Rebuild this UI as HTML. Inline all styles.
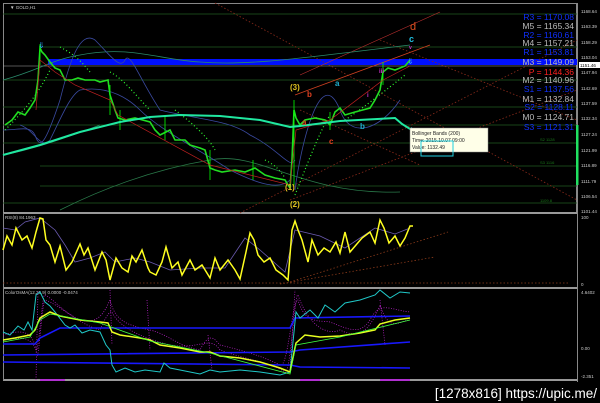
<!DOCTYPE html>
<html><head><meta charset="utf-8"><style>
html,body{margin:0;padding:0;background:#000;width:600px;height:403px;overflow:hidden}
svg{display:block}
text{font-family:"Liberation Sans",sans-serif}
</style></head><body>
<svg width="600" height="403" viewBox="0 0 600 403" xmlns="http://www.w3.org/2000/svg">
<rect width="600" height="403" fill="#000"/>
<!-- frames -->
<rect x="3.5" y="3.5" width="573" height="209" fill="none" stroke="#888" stroke-width="1"/>
<line x1="3" y1="213" x2="578" y2="213" stroke="#999" stroke-width="2"/>
<line x1="3" y1="288" x2="578" y2="288" stroke="#999" stroke-width="2"/>
<line x1="3" y1="380" x2="578" y2="380" stroke="#999" stroke-width="2"/>
<line x1="3.5" y1="213" x2="3.5" y2="380" stroke="#888"/>
<line x1="577.5" y1="3" x2="577.5" y2="382" stroke="#888"/>
<text x="10" y="9" font-size="4.5" fill="#ccc">▼ GOLD,H1</text>
<!-- grid green levels -->
<g stroke="#1f5a1f" stroke-width="0.8">
<line x1="40" y1="47" x2="577" y2="47"/><line x1="3" y1="80" x2="577" y2="80"/>
<line x1="3" y1="107" x2="577" y2="107"/><line x1="3" y1="125" x2="577" y2="125"/>
<line x1="3" y1="143" x2="577" y2="143"/><line x1="40" y1="166" x2="577" y2="166"/>
<line x1="40" y1="186" x2="577" y2="186"/><line x1="3" y1="203" x2="577" y2="203"/>
<line x1="3" y1="14" x2="577" y2="14"/>
</g>
<line x1="3" y1="66" x2="577" y2="66" stroke="#aaa" stroke-width="0.6"/>
<!-- blue band -->
<rect x="48" y="59" width="529" height="6" fill="#0010ff"/>
<!-- red dotted diagonal lines -->
<g stroke="#8a2a1a" stroke-width="0.8" stroke-dasharray="1.5,2" fill="none">
<line x1="215" y1="3" x2="577" y2="200"/><line x1="290" y1="200" x2="577" y2="90"/>
<line x1="380" y1="40" x2="577" y2="120"/><line x1="240" y1="213" x2="577" y2="40"/>
<line x1="300" y1="110" x2="420" y2="165"/>
</g>
<line x1="295" y1="95" x2="430" y2="45" stroke="#d04020" stroke-width="0.8"/>
<line x1="300" y1="75" x2="440" y2="12" stroke="#c03030" stroke-width="0.6"/>
<!-- bollinger bands thin -->
<g fill="none" stroke-width="0.8">
<path d="M3,80 C40,70 50,60 80,55 C130,45 160,60 200,62 C250,66 300,58 410,45" stroke="#2a8a6a"/>
<path d="M3,155 C30,150 60,140 100,125" stroke="#2a8a6a"/>
<path d="M60,210 C100,190 150,170 210,160 C260,150 300,195 400,192" stroke="#2a7a4a"/>
<path d="M3,130 C20,130 30,125 35,135 C40,150 45,145 60,100 C70,60 80,30 95,40 C110,55 120,70 125,60 C130,50 140,80 160,110 C200,120 230,120 250,135 C280,150 290,170 295,160" stroke="#3a4aa0"/>
<path d="M20,125 C35,130 40,150 50,140 C60,120 70,95 80,90 C110,85 130,100 140,110 C160,130 200,150 230,170 C260,185 280,190 290,180" stroke="#3a4aa0"/>
<path d="M295,190 C300,150 320,60 340,110 C350,140 380,130 400,100" stroke="#3a4aa0"/>
</g>
<!-- PSAR dots -->
<g fill="none" stroke="#30ff30" stroke-width="1.2" stroke-dasharray="1,2.5">
<path d="M60,47 C75,55 80,60 90,72"/><path d="M110,72 C125,80 135,95 150,110"/>
<path d="M5,130 C30,105 40,90 50,70"/><path d="M175,110 C195,125 210,140 215,150"/>
<path d="M265,160 C275,165 280,170 285,178"/><path d="M295,195 C305,170 320,130 330,115"/>
<path d="M345,120 C360,110 380,95 405,75"/>
</g>
<!-- price candles (approx) -->
<polyline fill="none" stroke="#22dd22" stroke-width="1.6" points="5,125 12,120 18,112 25,115 30,108 35,100 38,80 40,48 42,52 45,55 50,62 55,68 60,70 65,80 72,80 78,78 85,80 95,80 100,82 108,80 110,95 115,110 118,118 125,120 135,118 150,122 155,130 160,135 170,130 175,140 185,140 190,145 200,148 205,150 210,168 215,170 222,172 235,170 245,172 255,168 265,175 275,178 285,180 290,188 292,160 294,110 296,118 300,125 305,120 315,118 325,120 330,125 335,112 340,108 345,115 355,112 370,108 375,100 380,90 383,72 388,68 395,70 405,66 410,60"/>
<g stroke="#00ff00" stroke-width="0.8">
<line x1="40" y1="44" x2="40" y2="65"/><line x1="110" y1="85" x2="110" y2="115"/><line x1="210" y1="150" x2="210" y2="180"/><line x1="294" y1="100" x2="294" y2="185"/><line x1="383" y1="62" x2="383" y2="85"/>
<line x1="120" y1="110" x2="120" y2="130"/><line x1="165" y1="115" x2="165" y2="140"/><line x1="253" y1="160" x2="253" y2="180"/><line x1="330" y1="112" x2="330" y2="130"/>
</g>
<polyline fill="none" stroke="#c02020" stroke-width="0.7" points="36,110 40,60 55,72 75,85 110,100 118,115 210,165 290,185 296,130 330,120 383,80 410,66"/>
<!-- MA200 thick -->
<polyline fill="none" stroke="#20e8a0" stroke-width="2" points="3,155 40,145 80,132 120,122 150,117 180,115 220,116 260,120 290,127 300,126 340,121 395,118 402,124 415,132"/>
<polygon points="411,127 420,134 410,135" fill="#20e8e8"/>
<!-- wave labels -->
<g font-size="8" font-weight="bold">
<text x="290" y="90" fill="#e0c020">(3)</text>
<text x="307" y="97" fill="#e04020">b</text>
<text x="335" y="86" fill="#20b0d0">a</text>
<text x="302" y="125" fill="#e04020">a</text>
<text x="329" y="144" fill="#e04020">c</text>
<text x="360" y="129" fill="#20b0d0">b</text>
<text x="285" y="190" fill="#e0c020">(1)</text>
<text x="290" y="207" fill="#e0c020">(2)</text>
<text x="410" y="30" fill="#e05020" font-size="11" font-weight="normal">d</text>
<text x="409" y="42" fill="#20c0e0" font-size="9">c</text>
<text x="409" y="49" fill="#d030d0" font-size="5">v</text>
<text x="379" y="73" fill="#d030d0" font-size="6">iii</text>
<text x="367" y="97" fill="#d030d0" font-size="6">i</text>
</g>
<text x="38" y="48" fill="#30a0ff" font-size="8">⇓</text>
<text x="407" y="64" fill="#30a0ff" font-size="8">⇓</text>
<!-- tooltip -->
<rect x="410" y="128" width="78" height="24" fill="#ffffe8" stroke="#888" stroke-width="0.5"/>
<text x="412" y="135" font-size="5" fill="#222">Bollinger Bands (200)</text>
<text x="412" y="142" font-size="5" fill="#222">Time: 2015.10.07 09:00</text>
<text x="412" y="149" font-size="5" fill="#222">Value: 1132.49</text>
<rect x="421" y="141" width="32" height="15" fill="none" stroke="#20d0e0" stroke-width="1"/>
<!-- pivot labels -->
<g font-size="8.5" text-anchor="end">
<text x="574" y="20" fill="#1030ff">R3 = 1170.08</text>
<text x="574" y="29" fill="#bbb">M5 = 1165.34</text>
<text x="574" y="38" fill="#1030ff">R2 = 1160.61</text>
<text x="574" y="46" fill="#bbb">M4 = 1157.21</text>
<text x="574" y="55" fill="#1030ff">R1 = 1153.81</text>
<text x="574" y="65" fill="#bbb">M3 = 1149.09</text>
<text x="574" y="75" fill="#ff2020">P  = 1144.36</text>
<text x="574" y="83" fill="#bbb">M2 = 1140.96</text>
<text x="574" y="92" fill="#1030ff">S1 = 1137.56</text>
<text x="574" y="102" fill="#bbb">M1 = 1132.84</text>
<text x="574" y="110" fill="#1030ff">S2 = 1128.11</text>
<text x="574" y="120" fill="#bbb">M0 = 1124.71</text>
<text x="574" y="130" fill="#1030ff">S3 = 1121.31</text>
</g>
<g font-size="4" fill="#1a7a1a"><text x="540" y="141">S2 1128</text><text x="540" y="164">S3 1116</text><text x="540" y="202">1109.8</text></g>
<!-- right axis -->
<rect x="576" y="125" width="2.5" height="60" fill="#20e060"/>
<g font-size="4.5" fill="#ccc">
<text x="581" y="13">1168.64</text><text x="581" y="28">1163.39</text><text x="581" y="44">1158.29</text>
<text x="581" y="59">1153.04</text><text x="581" y="74">1147.94</text><text x="581" y="90">1142.69</text>
<text x="581" y="105">1137.59</text><text x="581" y="120">1132.34</text><text x="581" y="136">1127.24</text>
<text x="581" y="152">1121.99</text><text x="581" y="167">1116.89</text><text x="581" y="183">1111.79</text>
<text x="581" y="198">1106.54</text><text x="581" y="213">1101.44</text><text x="581" y="219">100</text>
<text x="581" y="286">0</text><text x="581" y="294">4.6402</text><text x="581" y="350">0.00</text><text x="581" y="378">-2.351</text>
</g>
<rect x="579" y="62" width="21" height="6" fill="#fff"/><text x="580" y="67" font-size="4.5" fill="#000">1151.46</text>
<!-- RSI -->
<text x="5" y="219" font-size="4.5" fill="#ccc">RSI(8) 84.1963</text>
<g stroke="#8a3a1a" stroke-width="0.8" stroke-dasharray="1.5,2" fill="none">
<line x1="290" y1="282" x2="448" y2="232"/><line x1="280" y1="284" x2="435" y2="257"/>
<line x1="3" y1="283" x2="570" y2="283"/>
</g>
<polyline fill="none" stroke="#6a5ab0" stroke-width="0.8" points="3,228 15,230 25,222 40,218 55,230 65,245 75,262 90,258 105,252 115,262 135,258 150,262 170,270 200,268 225,268 245,238 260,250 285,272 295,230 320,236 345,248 375,228 395,234 410,228"/>
<polyline fill="none" stroke="#ffff20" stroke-width="1.5" points="3,250 7,236 12,245 16,228 22,240 27,236 32,248 36,232 40,218 43,219 46,240 50,245 55,262 60,246 66,270 72,262 80,244 84,255 88,248 95,270 102,252 106,260 110,280 116,258 122,268 128,272 132,256 136,262 142,250 148,268 150,272 156,275 162,262 166,247 172,268 178,262 182,275 190,260 195,270 202,265 210,278 215,258 220,270 228,260 235,270 240,279 246,252 250,233 254,240 258,255 264,262 270,258 276,270 283,275 288,280 292,230 295,221 298,230 302,240 308,262 312,240 318,255 324,248 330,252 336,242 340,253 345,232 350,252 356,245 362,238 370,232 375,243 380,220 384,228 389,243 395,236 400,246 405,238 410,226 413,226"/>
<!-- MACD -->
<text x="5" y="294" font-size="4.5" fill="#ccc">ColorOsMA(12,26,9) 0.0000 -0.0474</text>
<g fill="none" stroke="#b020c0" stroke-width="0.8" stroke-dasharray="1,1.5">
<path d="M3,335 C20,330 30,330 35,345 C38,370 42,290 45,295 C55,300 60,310 80,320 C100,325 105,310 110,300 C115,320 125,325 150,330 C170,335 175,345 200,350 C210,330 215,340 220,345 C240,350 260,355 280,365 C288,370 292,300 298,300 C305,325 320,320 330,322 C350,330 360,335 370,320 C380,300 390,310 410,312"/>
<path d="M3,340 C20,338 30,335 36,350 C38,378 42,300 45,300 C60,305 80,325 100,330 C105,318 110,310 112,312 C120,330 150,340 170,345 C200,350 210,335 220,350 C240,358 270,362 285,372 C290,378 295,290 298,295 C310,330 330,335 340,330 C360,340 370,330 380,305 C390,335 400,320 410,320"/>
<path d="M36,380 L38,290 M110,290 L112,345 M147,300 L150,350 M208,335 L212,370 M290,370 L295,290 M380,300 L385,345"/>
</g>
<g fill="none" stroke="#1818ff" stroke-width="1.6">
<polyline points="3,344 35,344 40,338 60,328 290,328 295,318 410,316"/>
<polyline points="3,355 290,352 300,350 410,342"/>
<polyline points="3,362 290,365 300,367 410,368"/>
</g>
<polyline fill="none" stroke="#20c8c8" stroke-width="1" points="3,332 10,335 18,326 24,330 28,322 32,330 36,295 40,292 45,302 50,306 55,312 65,325 70,328 75,325 82,333 90,330 100,332 106,345 110,350 112,365 116,372 125,368 135,372 145,370 160,372 164,363 170,368 180,370 200,374 210,370 220,372 240,370 260,372 280,375 290,372 296,312 300,318 310,310 318,318 325,305 335,312 345,303 360,300 375,295 380,290 390,298 400,292 410,293"/>
<polyline fill="none" stroke="#e8ff20" stroke-width="1.5" points="3,340 15,338 30,335 35,330 40,318 50,312 60,316 80,320 100,322 108,323 112,332 120,335 140,338 150,340 160,345 180,348 200,352 210,352 220,356 240,358 260,362 280,368 290,372 296,343 305,335 320,337 340,336 360,333 375,330 380,324 395,320 410,318"/>
<polyline fill="none" stroke="#40ff40" stroke-width="0.8" points="3,342 30,337 40,320 50,314 100,323 150,341 210,353 290,374 296,345 340,337 410,320"/>
<g fill="#b030d0"><rect x="40" y="379" width="25" height="2"/><rect x="300" y="379" width="20" height="2"/><rect x="380" y="379" width="30" height="2"/></g>
<!-- watermark -->
<text x="597" y="398" font-size="13.5" fill="#fff" text-anchor="end" font-family="'Liberation Sans',sans-serif">[1278x816] https://upic.me/</text>
</svg>
</body></html>
